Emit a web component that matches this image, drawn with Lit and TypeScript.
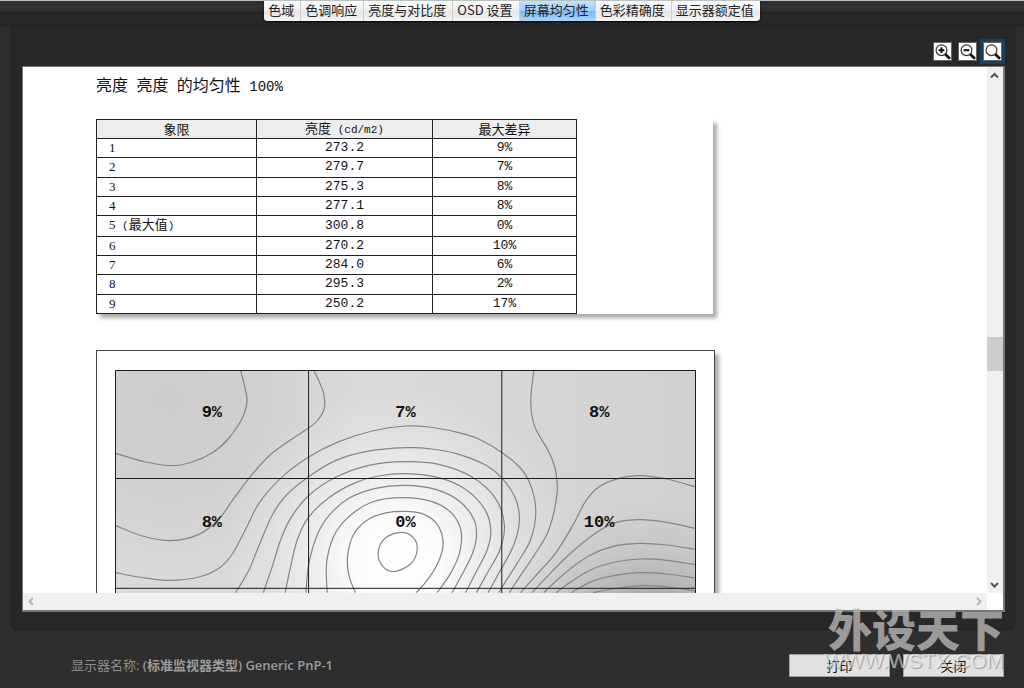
import { LitElement, html, svg, css } from "lit";
import { customElement, property, state } from "lit/decorators.js";
import { classMap } from "lit/directives/class-map.js";

type Point = [number, number];

/** Smooth path through a list of points (Catmull-Rom converted to cubic Béziers). */
function smooth(points: Point[], closed = false): string {
  const n = points.length;
  const at = (i: number): Point =>
    closed ? points[(i + n) % n] : points[Math.max(0, Math.min(n - 1, i))];
  let d = `M${points[0].join(" ")}`;
  const last = closed ? n : n - 1;
  for (let i = 0; i < last; i++) {
    const [a, b, c, e] = [at(i - 1), at(i), at(i + 1), at(i + 2)];
    d += `C${b[0] + (c[0] - a[0]) / 6} ${b[1] + (c[1] - a[1]) / 6} ${c[0] - (e[0] - b[0]) / 6} ${
      c[1] - (e[1] - b[1]) / 6
    } ${c[0]} ${c[1]}`;
  }
  return closed ? d + "Z" : d;
}

const CONTOURS: Point[][] = [
  [[455, 92], [474, 175], [462, 230], [415, 300], [370, 338], [310, 366], [250, 377], [170, 366], [80, 340]],
  [[675, 92], [703, 155], [706, 205], [687, 240], [658, 265], [600, 303], [540, 348], [480, 415], [430, 482], [390, 537], [330, 583], [245, 602], [160, 588], [80, 557]],
  [[80, 698], [150, 711], [240, 721], [330, 711], [390, 685], [430, 642], [470, 568], [510, 490], [575, 415], [658, 352], [750, 305], [850, 273], [950, 258], [1020, 261], [1110, 278], [1170, 297], [1240, 338], [1300, 390], [1330, 448], [1341, 520], [1325, 600], [1285, 670], [1252, 722], [1230, 758]],
  [[440, 758], [480, 690], [515, 605], [550, 525], [590, 468], [658, 411], [740, 362], [830, 335], [950, 323], [1030, 327], [1110, 343], [1190, 375], [1240, 415], [1280, 475], [1292, 540], [1275, 615], [1230, 700], [1198, 758]],
  [[523, 758], [550, 680], [575, 600], [605, 535], [658, 468], [740, 412], [840, 376], [950, 365], [1050, 373], [1150, 411], [1220, 475], [1247, 555], [1233, 630], [1195, 700], [1163, 758]],
  [[589, 758], [605, 680], [625, 600], [658, 533], [720, 473], [800, 428], [870, 408], [950, 401], [1050, 413], [1130, 448], [1188, 508], [1206, 570], [1195, 630], [1160, 700], [1130, 758]],
  [[651, 758], [660, 670], [685, 585], [720, 527], [780, 475], [860, 445], [950, 436], [1040, 448], [1110, 482], [1155, 537], [1163, 590], [1150, 643], [1120, 703], [1090, 758]],
  [[715, 758], [713, 670], [735, 588], [780, 530], [850, 486], [940, 473], [1030, 485], [1090, 521], [1117, 575], [1112, 640], [1085, 700], [1045, 758]],
  [[800, 758], [781, 710], [776, 650], [795, 582], [840, 537], [895, 518], [945, 514], [1000, 521], [1045, 553], [1063, 610], [1047, 670], [1012, 725], [982, 758]],
  [[1335, 92], [1326, 185], [1338, 260], [1380, 335], [1400, 390], [1405, 460], [1380, 570], [1335, 648], [1295, 707], [1262, 758]],
  [[1818, 440], [1735, 417], [1650, 407], [1590, 415], [1530, 441], [1490, 485], [1450, 560], [1400, 640], [1340, 708], [1295, 758]],
  [[1818, 565], [1735, 547], [1655, 539], [1580, 548], [1520, 580], [1440, 645], [1370, 715], [1330, 758]],
  [[1818, 628], [1735, 615], [1650, 610], [1570, 620], [1500, 648], [1430, 698], [1365, 758]],
  [[1818, 674], [1735, 661], [1655, 657], [1580, 666], [1505, 690], [1440, 730], [1402, 758]],
  [[1818, 714], [1735, 702], [1655, 698], [1580, 706], [1510, 724], [1448, 758]],
  [[1818, 753], [1735, 741], [1665, 737], [1590, 744], [1513, 758]],
];
const PEAK: Point[] = [[935, 577], [973, 592], [985, 630], [965, 672], [915, 695], [880, 677], [868, 637], [888, 595]];

const TABS = ["色域", "色调响应", "亮度与对比度", "OSD 设置", "屏幕均匀性", "色彩精确度", "显示器额定值"];

const ROWS = [
  { zone: "1", note: "", luminance: "273.2", diff: "9%" },
  { zone: "2", note: "", luminance: "279.7", diff: "7%" },
  { zone: "3", note: "", luminance: "275.3", diff: "8%" },
  { zone: "4", note: "", luminance: "277.1", diff: "8%" },
  { zone: "5", note: "最大值", luminance: "300.8", diff: "0%" },
  { zone: "6", note: "", luminance: "270.2", diff: "10%" },
  { zone: "7", note: "", luminance: "284.0", diff: "6%" },
  { zone: "8", note: "", luminance: "295.3", diff: "2%" },
  { zone: "9", note: "", luminance: "250.2", diff: "17%" },
];

@customElement("uniformity-map")
class UniformityMap extends LitElement {
  @property({ attribute: false }) labels: string[] = [];

  static styles = css`
    :host {
      display: block;
    }
    .map {
      position: relative;
      display: grid;
      grid-template-columns: repeat(3, 1fr);
      grid-auto-rows: 110px;
    }
    .plot {
      position: absolute;
      inset: 0;
      width: 100%;
      height: 100%;
    }
    .label {
      position: relative;
      display: grid;
      place-items: center;
      padding-bottom: 24px;
      font: bold 17px/20px "Liberation Mono", monospace;
      color: #111;
    }
    .contour {
      fill: none;
      stroke: #858585;
      stroke-width: 3.6;
    }
    .rule {
      fill: none;
      stroke: #1c1c1c;
      stroke-width: 3;
      shape-rendering: crispEdges;
    }
  `;

  render() {
    return html`
      <div class="map">
        <svg class="plot" viewBox="78 90 1744 990" preserveAspectRatio="none" aria-hidden="true">
          <defs>
            <radialGradient id="bright" gradientUnits="userSpaceOnUse" cx="925" cy="660" r="520">
              <stop offset="0" stop-color="#fff" />
              <stop offset=".25" stop-color="#fff" stop-opacity=".92" />
              <stop offset=".45" stop-color="#fff" stop-opacity=".58" />
              <stop offset=".75" stop-color="#fff" stop-opacity=".18" />
              <stop offset="1" stop-color="#fff" stop-opacity="0" />
            </radialGradient>
            <radialGradient id="dark" gradientUnits="userSpaceOnUse" cx="1680" cy="980" r="500">
              <stop offset="0" stop-color="#888" />
              <stop offset=".4" stop-color="#929292" stop-opacity=".66" />
              <stop offset=".7" stop-color="#a0a0a0" stop-opacity=".24" />
              <stop offset="1" stop-color="#aaa" stop-opacity="0" />
            </radialGradient>
            <radialGradient id="corner" gradientUnits="userSpaceOnUse" cx="240" cy="180" r="560">
              <stop offset="0" stop-color="#cdcdcd" />
              <stop offset=".4" stop-color="#cdcdcd" stop-opacity=".8" />
              <stop offset="1" stop-color="#cdcdcd" stop-opacity="0" />
            </radialGradient>
            <linearGradient id="base" x1="0" y1="0" x2="1" y2="0">
              <stop offset="0" stop-color="#dadada" />
              <stop offset=".5" stop-color="#d9d9d9" />
              <stop offset="1" stop-color="#d1d1d1" />
            </linearGradient>
          </defs>
          <rect x="78" y="90" width="1744" height="990" fill="url(#base)" />
          <rect x="78" y="90" width="1744" height="990" fill="url(#corner)" />
          <rect x="78" y="90" width="1744" height="990" fill="url(#bright)" />
          <rect x="78" y="90" width="1744" height="990" fill="url(#dark)" />
          ${CONTOURS.map((c) => svg`<path class="contour" d=${smooth(c)} />`)}
          <path class="contour" d=${smooth(PEAK, true)} />
          <path class="rule" d="M79.5 91.5H1820.5V1078H79.5ZM659 90V1080M1239 90V1080M78 415.5H1822M78 745H1822" />
        </svg>
        ${this.labels.map((l) => html`<span class="label">${l}</span>`)}
        <span class="label"></span><span class="label"></span><span class="label"></span>
      </div>
    `;
  }
}

@customElement("app-root")
class AppRoot extends LitElement {
  @state() private tab = 4;
  @state() private zoom = 2;

  static styles = css`
    :host {
      display: block;
      --ui: "Open Sans", "Noto Sans CJK SC", sans-serif;
      --mono: "Liberation Mono", "Noto Sans CJK SC", monospace;
      font-family: var(--ui);
    }
    * {
      box-sizing: border-box;
    }
    button {
      font: inherit;
      margin: 0;
      padding: 0;
    }
    .window {
      position: relative;
      display: flex;
      flex-direction: column;
      height: 100vh;
      overflow: hidden;
      background: #2e2e2e;
      border-top: 1px solid #b9c2bf;
    }
    .header {
      display: flex;
      justify-content: center;
      align-items: flex-start;
      height: 25px;
      background: linear-gradient(#303232 0 10px, #222 11px, #282828 14px);
      border-bottom: 1px solid #222;
    }
    .tabs {
      display: flex;
      height: 20px;
      border-radius: 0 0 4px 4px;
      overflow: hidden;
      background: #f2f2f2;
      box-shadow: 0 1px 2px #000;
    }
    .tab {
      border: 0;
      border-right: 1px solid #ccc;
      padding: 0 6px 2px 4px;
      background: linear-gradient(#fbfbfb, #f0f0f0 50%, #e6e6e6 51%, #f4f4f4);
      font: 13px/18px "Noto Sans CJK SC", sans-serif;
      color: #222;
      white-space: nowrap;
    }
    .tab:last-child {
      border-right: 0;
    }
    .tab.active {
      background: linear-gradient(#c4e0fb, #9dccfb 50%, #78b8f8 51%, #a9d6fd);
    }
    .panel {
      flex: 1;
      min-height: 0;
      display: flex;
      flex-direction: column;
      margin: 0 9px 0 11px;
      padding: 13px 9px 17px 10px;
      background: #282828;
      border: solid #222;
      border-width: 0 1px 1px;
      border-radius: 0 0 6px 6px;
    }
    .tools {
      display: flex;
      justify-content: flex-end;
      align-items: center;
      height: 24px;
      margin-bottom: 3px;
      padding-right: 3px;
      gap: 6px;
    }
    .tool {
      width: 19px;
      height: 19px;
      border: 1px solid #666;
      background: #fff;
      display: grid;
      place-items: center;
    }
    .tool.active {
      outline: 3px solid #1b3f5e;
    }
    .viewer {
      flex: 1;
      min-height: 0;
      display: grid;
      grid-template: minmax(0, 1fr) 17px / minmax(0, 1fr) 16px;
      border: solid #777;
      border-width: 1px 2px 2px 1px;
      background: #fff;
    }
    .page {
      overflow: hidden;
      padding: 5px 20px 0 73px;
      background: #fff;
      color: #111;
    }
    .vbar,
    .hbar {
      display: flex;
      background: #f0f0f0;
    }
    .vbar {
      flex-direction: column;
    }
    .hbar {
      justify-content: space-between;
    }
    .arrow {
      display: grid;
      place-items: center;
      width: 17px;
      height: 17px;
      border: 0;
      background: none;
    }
    .vbar .arrow {
      width: 14px;
    }
    .arrow svg {
      fill: none;
      stroke: #555;
      stroke-width: 2;
    }
    .hbar .arrow svg {
      stroke: #b5b5b5;
    }
    .before {
      flex: 253;
    }
    .after {
      flex: 205;
    }
    .thumb {
      height: 34px;
      background: #cdcdcd;
    }
    .title {
      margin: 0 0 20px;
      font: 16px/24px "Noto Sans CJK SC", sans-serif;
    }
    .title .half {
      font: 14px/24px "Liberation Mono", monospace;
    }
    .card {
      width: 617px;
      max-width: 100%;
      margin-bottom: 36px;
      background: #fff;
      box-shadow: 4px 4px 4px #aaa;
    }
    table {
      width: 481px;
      height: 195px;
      border-collapse: collapse;
      table-layout: fixed;
    }
    .c1 {
      width: 160px;
    }
    .c2 {
      width: 176px;
    }
    th,
    td {
      border: 1px solid #222;
      padding: 0;
      font: 13px/16px var(--mono);
      text-align: center;
    }
    th {
      background: #ededed;
      font: 13px/16px "Noto Sans CJK SC", sans-serif;
    }
    .unit {
      font: 11px/16px "Liberation Mono", monospace;
    }
    .zone {
      padding-left: 12px;
      text-align: left;
      font: 13px/16px "Liberation Serif", "Noto Sans CJK SC", serif;
    }
    .frame {
      width: 619px;
      max-width: 100%;
      padding: 19px 18px;
      border: 1px solid #444;
      background: #fff;
      box-shadow: 4px 4px 4px #aaa;
    }
    .footer {
      display: flex;
      align-items: center;
      justify-content: space-between;
      gap: 20px;
      height: 58px;
      padding: 12px 20px 0 71px;
    }
    .monitor {
      font-size: 13px;
      line-height: 20px;
      color: #8c8c8c;
      white-space: nowrap;
      overflow: hidden;
    }
    .monitor b {
      font-weight: 600;
      color: #9c9c9c;
    }
    .actions {
      display: flex;
      gap: 13px;
    }
    .action {
      width: 101px;
      height: 23px;
      border: 1px solid #a0a0a0;
      background: #e1e1e1;
      font: 13px/19px "Noto Sans CJK SC", sans-serif;
      color: #111;
    }
    .mark {
      position: absolute;
      right: 20px;
      bottom: 16px;
      display: flex;
      flex-direction: column;
      align-items: flex-end;
      pointer-events: none;
      white-space: nowrap;
    }
    .mark-name {
      font: 900 44px/44px "Noto Sans CJK SC", sans-serif;
      color: rgba(175, 175, 175, 0.85);
    }
    .mark-site {
      font: 21px/22px "Liberation Sans", sans-serif;
      color: rgba(255, 255, 255, 0.55);
      text-shadow: 1px 1px 1px rgba(90, 90, 90, 0.5);
    }
  `;

  private glass(kind: number) {
    return html`<svg width="17" height="17" viewBox="0 0 17 17" aria-hidden="true">
      <circle cx="7.5" cy="7.2" r="5.4" fill="#fff" stroke="#333" stroke-width="1.2" />
      <path d="M11.3 11.2L16 15.8" stroke="#111" stroke-width="2.6" />
      ${kind < 2 ? svg`<path d="M4.6 7.2H10.4" stroke="#111" stroke-width="2" />` : ""}
      ${kind === 0 ? svg`<path d="M7.5 4.3V10.1" stroke="#111" stroke-width="2" />` : ""}
    </svg>`;
  }

  private arrow(label: string, d: string) {
    return html`<button class="arrow" aria-label=${label}>
      <svg width="9" height="9" viewBox="0 0 9 9"><path d=${d} /></svg>
    </button>`;
  }

  render() {
    return html`
      <div class="window">
        <header class="header">
          <nav class="tabs">
            ${TABS.map(
              (t, i) => html`<button
                class=${classMap({ tab: true, active: i === this.tab })}
                @click=${() => (this.tab = i)}
              >${t}</button>`
            )}
          </nav>
        </header>
        <main class="panel">
          <div class="tools">
            ${["放大", "缩小", "缩放"].map(
              (t, i) => html`<button
                class=${classMap({ tool: true, active: i === this.zoom })}
                aria-label=${t}
                @click=${() => (this.zoom = i)}
              >${this.glass(i)}</button>`
            )}
          </div>
          <div class="viewer">
            <section class="page">
              <h1 class="title">亮度<span class="half"> </span>亮度<span class="half"> </span>的均匀性<span class="half"> 100%</span></h1>
              <div class="card">
                <table>
                  <colgroup><col class="c1" /><col class="c2" /><col /></colgroup>
                  <thead>
                    <tr>
                      <th>象限</th>
                      <th>亮度<span class="unit"> (cd/m2)</span></th>
                      <th>最大差异</th>
                    </tr>
                  </thead>
                  <tbody>
                    ${ROWS.map(
                      (r) => html`<tr>
                        <td class="zone">${r.zone}${r.note
                          ? html`<span class="unit"> (</span>${r.note}<span class="unit">)</span>`
                          : ""}</td>
                        <td>${r.luminance}</td>
                        <td>${r.diff}</td>
                      </tr>`
                    )}
                  </tbody>
                </table>
              </div>
              <div class="frame">
                <uniformity-map .labels=${ROWS.slice(0, 6).map((r) => r.diff)}></uniformity-map>
              </div>
            </section>
            <div class="vbar">
              ${this.arrow("向上", "M1 6.5L4.5 3L8 6.5")}
              <div class="before"></div>
              <div class="thumb"></div>
              <div class="after"></div>
              ${this.arrow("向下", "M1 3L4.5 6.5L8 3")}
            </div>
            <div class="hbar">
              ${this.arrow("向左", "M6 1L2.5 4.5L6 8")}
              ${this.arrow("向右", "M3 1L6.5 4.5L3 8")}
            </div>
          </div>
        </main>
        <footer class="footer">
          <div class="monitor">显示器名称: <b>(标准监视器类型) Generic PnP-1</b></div>
          <div class="actions">
            <button class="action">打印</button>
            <button class="action">关闭</button>
          </div>
        </footer>
        <div class="mark">
          <span class="mark-name">外设天下</span>
          <span class="mark-site">WWW.WSTX.COM</span>
        </div>
      </div>
    `;
  }
}
